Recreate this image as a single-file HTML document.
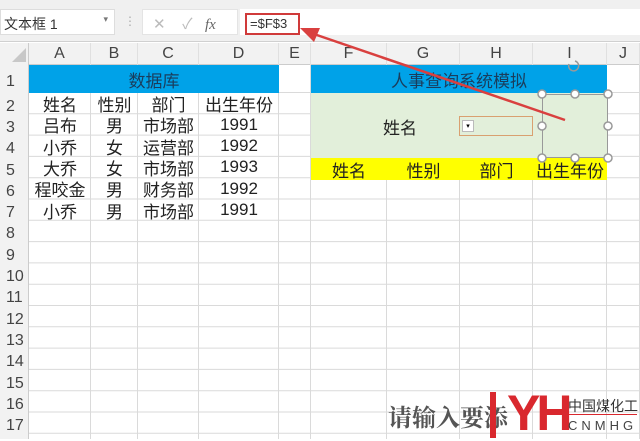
<!DOCTYPE html>
<html><head><meta charset="utf-8"><style>
*{margin:0;padding:0;box-sizing:border-box}
body{width:640px;height:439px;overflow:hidden;background:#fff;font-family:"Liberation Sans","Noto Sans CJK SC",sans-serif;position:relative}
.a{position:absolute}
.c{position:absolute;display:flex;align-items:center;justify-content:center;font-size:16px;color:#222}
.h{color:#444;font-size:16px}
</style></head><body>
<!-- formula bar -->
<div class="a" style="left:0;top:0;width:640px;height:42px;background:#f0f0f0;border-bottom:1px solid #d0d0d0"></div>
<div class="a" style="left:0;top:9px;width:115px;height:26px;background:#fff;border:1px solid #ddd;font-size:14px;color:#333;padding:4px 3px">文本框 1<span style="position:absolute;right:6px;top:4px;font-size:9px;color:#777">▾</span></div>
<div class="a" style="left:124px;top:14px;color:#aaa;font-size:12px">⋮</div>
<div class="a" style="left:142px;top:9px;width:96px;height:26px;background:#fff;border:1px solid #e4e4e4;font-size:15px;color:#bbb;padding:3px 10px">✕&nbsp;&nbsp;&nbsp;&nbsp;✓&nbsp;&nbsp;&nbsp;<i style="font-family:'Liberation Serif',serif;color:#666">fx</i></div>
<div class="a" style="left:240px;top:9px;width:400px;height:26px;background:#fff"></div>
<div class="a" style="left:245px;top:13px;width:55px;height:22px;border:2px solid #d03a3a;font-size:13px;color:#333;padding:1px 3px">=$F$3</div>
<!-- headers -->
<div class="a" style="left:0;top:43px;width:640px;height:22px;background:#f2f2f2;border-bottom:1px solid #ccc"></div>
<div class="a" style="left:0;top:43px;width:29px;height:396px;background:#f2f2f2;border-right:1px solid #ccc"></div>
<svg class="a" style="left:10px;top:48px" width="16" height="14"><polygon points="16,0 16,14 2,14" fill="#c8c8c8"/></svg>
<div id="g"></div>
<svg class="a" style="left:0;top:0" width="640" height="439" id="lines"></svg>
<!-- fills -->
<div class="a" style="left:29px;top:65px;width:250px;height:28px;background:#00a2e8"></div>
<div class="a" style="left:311px;top:65px;width:296px;height:28px;background:#00a2e8"></div>
<div class="a" style="left:311px;top:93px;width:296px;height:65px;background:#e2efda"></div>
<div class="a" style="left:311px;top:158px;width:296px;height:22px;background:#ffff00"></div>
<div class="c" style="left:29px;top:65px;width:250px;height:28px;color:#1a3d5c;font-size:17px">数据库</div>
<div class="c" style="left:311px;top:65px;width:296px;height:28px;color:#1a3d5c;font-size:17px">人事查询系统模拟</div>
<div class="c" style="left:370px;top:115px;width:60px;height:22px;font-size:17px">姓名</div>
<div class="a" style="left:459px;top:116px;width:74px;height:20px;border:1px solid #d9a070;background:#e2efda"><div style="position:absolute;left:2px;top:3px;width:12px;height:12px;background:#fff;border:1px solid #bbb;font-size:7px;text-align:center;line-height:11px">▾</div></div>
<div id="t"></div>
<!-- selection -->
<div class="a" style="left:542px;top:94px;width:66px;height:64px;border:1px solid #999"></div>
<svg class="a" style="left:0;top:0" width="640" height="439">
<g fill="#fff" stroke="#999" stroke-width="1.5">
<circle cx="542" cy="94" r="4"/><circle cx="575" cy="94" r="4"/><circle cx="608" cy="94" r="4"/>
<circle cx="542" cy="126" r="4"/><circle cx="608" cy="126" r="4"/>
<circle cx="542" cy="158" r="4"/><circle cx="575" cy="158" r="4"/><circle cx="608" cy="158" r="4"/>
</g>
<path d="M569 64 a5 5 0 1 0 6 -3" fill="none" stroke="#999" stroke-width="1.5"/>
<line x1="565" y1="120" x2="308" y2="32" stroke="#d9403f" stroke-width="2.5"/>
<polygon points="300,28 320,28 314,42" fill="#d9403f"/>
</svg>
<!-- watermark -->
<div class="a" style="left:388px;top:398px;font-size:24px;font-weight:bold;color:#555;font-family:'Noto Serif CJK SC',serif">请输入要添</div>
<div class="a" style="left:507px;top:386px;font-size:50px;font-weight:bold;color:#d9282e;letter-spacing:-4px;line-height:54px">YH</div>
<div class="a" style="left:490px;top:392px;width:6px;height:46px;background:#d9282e"></div>
<div class="a" style="left:568px;top:396px;font-size:14px;color:#333">中国煤化工</div>
<div class="a" style="left:567px;top:414px;width:70px;height:1px;background:#d9282e"></div>
<div class="a" style="left:568px;top:418px;font-size:13px;color:#444;letter-spacing:4px">CNMHG</div>
<script>
var cols=[29,91,138,199,279,311,387,460,533,607,640],L="ABCDEFGHIJ";
var rows=[65,93];for(var i=2;i<=17;i++)rows.push(93+(i-1)*21.3);
var s='';
for(var i=0;i<10;i++)s+='<div class="c h" style="left:'+cols[i]+'px;top:43px;width:'+(cols[i+1]-cols[i])+'px;height:22px;border-right:1px solid #e0e0e0">'+L[i]+'</div>';
for(var r=0;r<17;r++)s+='<div class="c h" style="left:0;top:'+rows[r]+'px;width:29px;height:'+(rows[r+1]-rows[r])+'px;justify-content:flex-start;padding-left:6px;padding-top:6px">'+(r+1)+'</div>';
document.getElementById('g').innerHTML=s;
var ln='';
for(var i=1;i<cols.length;i++)ln+='<line x1="'+(cols[i]-.5)+'" y1="65" x2="'+(cols[i]-.5)+'" y2="439" stroke="#dadada"/>';
for(var r=1;r<rows.length;r++)ln+='<line x1="29" y1="'+(rows[r]-.5)+'" x2="640" y2="'+(rows[r]-.5)+'" stroke="#dadada"/>';
document.getElementById('lines').innerHTML=ln;
var d=[["姓名","性别","部门","出生年份"],["吕布","男","市场部","1991"],["小乔","女","运营部","1992"],["大乔","女","市场部","1993"],["程咬金","男","财务部","1992"],["小乔","男","市场部","1991"]];
var t='';
for(var r=0;r<d.length;r++)for(var c=0;c<4;c++)t+='<div class="c" style="left:'+cols[c]+'px;top:'+rows[r+1]+'px;width:'+(cols[c+1]-cols[c])+'px;height:21px;font-size:17px">'+d[r][c]+'</div>';
for(var c=0;c<4;c++)t+='<div class="c" style="left:'+cols[c+5]+'px;top:158px;width:'+(cols[c+6]-cols[c+5])+'px;height:22px;font-size:17px">'+d[0][c]+'</div>';
document.getElementById('t').innerHTML=t;
</script>
</body></html>
